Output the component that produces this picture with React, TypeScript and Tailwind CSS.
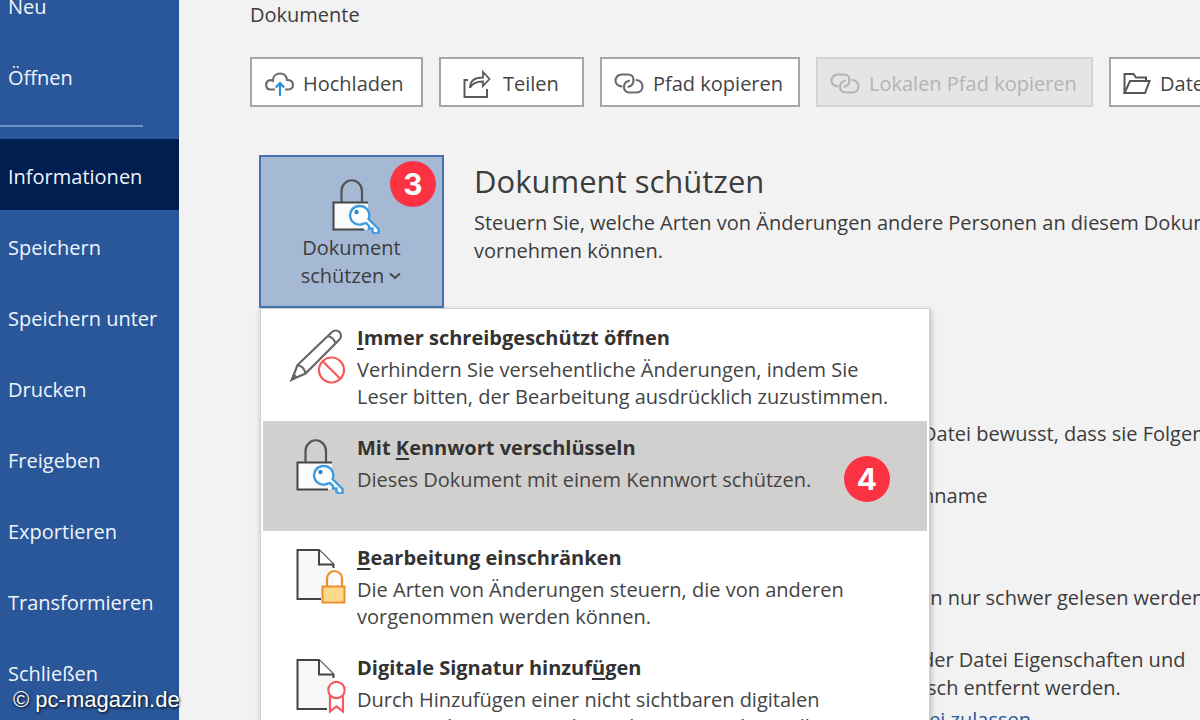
import type { ReactNode } from "react";

const navTop = ["Neu", "Öffnen"];
const navMain = [
  "Informationen",
  "Speichern",
  "Speichern unter",
  "Drucken",
  "Freigeben",
  "Exportieren",
  "Transformieren",
  "Schließen",
];

function NavItem({ label, active }: { label: string; active?: boolean }) {
  return (
    <a
      href="#"
      aria-current={active ? "page" : undefined}
      className={
        "flex h-[71px] shrink-0 items-center px-2 pt-1 font-medium whitespace-nowrap " +
        (active ? "bg-[#001e4f]" : "")
      }
    >
      {label}
    </a>
  );
}

function CloudIcon() {
  return (
    <svg width="30" height="26" viewBox="0 0 30 26" fill="none" strokeWidth="2.200">
      <path
        d="M11 18.500H6.500A4.700 4.700 0 0 1 5.500 9.300C7 9 8 9.300 8.800 9.800 9 5.500 12 2.500 16 2.500c4 0 6.500 2.800 7 6.300 3.400 0 6 2 6 4.900s-2 4.800-5 4.800h-3"
        stroke="#6c6c6c"
      />
      <path d="M16 25V12.500M11.800 16.500 16 12l4.200 4.500" stroke="#2b8fd9" />
    </svg>
  );
}

function ShareIcon() {
  return (
    <svg width="28" height="28" viewBox="0 0 28 28" fill="none" stroke="#5a5a5a" strokeWidth="2">
      <path d="M5 10H1.500v17H24v-8" />
      <path d="M7 18c0-7 5-10.500 13-10.500V2l6.500 7-6.500 7v-4.500C13 11.500 9 13.500 7 18Z" strokeWidth="1.800" />
    </svg>
  );
}

function LinkIcon({ className }: { className: string }) {
  return (
    <svg
      width="30"
      height="22"
      viewBox="0 0 30 22"
      fill="none"
      stroke="currentColor"
      strokeWidth="2.200"
      strokeLinecap="round"
      className={className}
    >
      <path d="M7.500 13.300C4 13 1.500 10.500 1.500 7.500S4 1.500 7.500 1.500H14c3.500 0 5.500 2.500 5.500 5.500 0 3.300-2 6-5 6.700" />
      <path d="M22.500 7c3.500.5 6 3 6 6.200 0 3.800-2.500 6.300-6 6.300H16c-3.500 0-6-2-6-5.300 0-3.300 2-5.700 5-6.400" />
    </svg>
  );
}

function FolderIcon() {
  return (
    <svg width="28" height="24" viewBox="0 0 28 24" fill="none" stroke="#555" strokeWidth="2">
      <path d="M1.500 21V2h9l2.500 3.500h10V9" />
      <path d="M1.500 21 7 9h19.500L22 21Z" />
    </svg>
  );
}

function LockKeyIcon() {
  return (
    <svg width="50" height="56" viewBox="0 0 50 56" fill="none">
      <path d="M9.500 24V13a10 10.500 0 0 1 20.500 0v11" stroke="#555" strokeWidth="2.200" />
      <path d="M1.500 24.500H36V51.500H1.500Z" fill="#fafafa" />
      <path d="M36 24.500H1.500v27H32" stroke="#444" strokeWidth="2" />
      <path
        d="M28 28a9.300 9.300 0 1 0 3.500 17.600l2.500-.6 3 3v2.500h3.500V54l2.500 1.500h3.500V51L36.500 41A9.300 9.300 0 0 0 28 28Z"
        fill="#fff"
        stroke="#3d9be0"
        strokeWidth="2.400"
      />
      <circle cx="24.500" cy="34" r="2.200" fill="#2e86cf" />
    </svg>
  );
}

function PencilIcon() {
  return (
    <svg width="56" height="56" viewBox="0 0 56 56" fill="none" stroke="#666" strokeWidth="2.200">
      <path d="M2 51.500 7.500 37 42 4c2-2 5.500-2 7.500 0s2 5.500 0 7.500L15.500 45.500Z" fill="#fff" />
      <path d="M7.500 37c5 1 7 3.500 8 8.500M38 8c4 1 6.500 3.500 7.500 7.500M2 51.500l4-2.500-2-2Z" />
      <circle cx="41.500" cy="42" r="12.500" fill="#fff" stroke="#f65a5f" />
      <path d="m32.700 33.200 17.600 17.600" stroke="#f65a5f" />
    </svg>
  );
}

function Page({ cut }: { cut: string }) {
  return (
    <>
      <path d="M1.500 2H23l14 14.500V51H1.500Z" fill="#f7f7f7" />
      <path d={cut} stroke="#444" strokeWidth="2" />
      <path d="M23 2v14.500h14.500" fill="#fff" stroke="#444" strokeWidth="2" />
    </>
  );
}

function PageLockIcon() {
  return (
    <svg width="50" height="56" viewBox="0 0 50 56" fill="none">
      <Page cut="M25 51H1.500V2H23l14.500 14.500V20" />
      <path d="M31 39V30.500a7.500 7.500 0 0 1 15 0V39" stroke="#ee8f2e" strokeWidth="2.200" />
      <path d="M26.500 38.500h22v16h-22Z" fill="#f9da8b" stroke="#ee8f2e" strokeWidth="2" />
    </svg>
  );
}

function PageSealIcon() {
  return (
    <svg width="50" height="56" viewBox="0 0 50 56" fill="none">
      <Page cut="M31 51H1.500V2H23l14.500 14.500V20" />
      <path d="M34 38v15.500l6.500-5 6.500 5V38" fill="#fff" stroke="#f65a5f" strokeWidth="2.200" />
      <circle cx="40.500" cy="32" r="8.200" fill="#fff" stroke="#f65a5f" strokeWidth="2.200" />
    </svg>
  );
}

function Badge({ children, className }: { children: ReactNode; className: string }) {
  return (
    <span
      className={
        "absolute flex size-[46px] items-center justify-center rounded-full bg-[#fb3242] font-['Inter',sans-serif] text-[30px] font-bold text-white " +
        className
      }
    >
      {children}
    </span>
  );
}

function ToolButton({
  icon,
  label,
  disabled,
  className,
}: {
  icon: ReactNode;
  label: string;
  disabled?: boolean;
  className: string;
}) {
  return (
    <button
      type="button"
      disabled={disabled}
      className={
        "flex h-[50px] shrink-0 items-center border-2 pt-[3px] whitespace-nowrap " +
        (disabled
          ? "border-[#d3d3d3] bg-[#e5e5e5] text-[#b4b4b4] "
          : "border-[#a6a6a6] bg-white text-[#444] ") +
        className
      }
    >
      {icon}
      {label}
    </button>
  );
}

function MenuItem({
  icon,
  title,
  lines,
  active,
  badge,
}: {
  icon: ReactNode;
  title: ReactNode;
  lines: string[];
  active?: boolean;
  badge?: ReactNode;
}) {
  return (
    <button
      type="button"
      role="menuitem"
      className={"relative flex h-[110px] w-full items-start pt-[13px] text-left " + (active ? "bg-[#d2d0ce]" : "")}
    >
      <span className="flex w-[94px] shrink-0 justify-end pt-1 pr-[11px]">{icon}</span>
      <span className="flex flex-col whitespace-nowrap">
        <span className="mb-1 leading-[28px] font-bold text-[#333]">{title}</span>
        {lines.map((line) => (
          <span key={line} className="leading-[27px] text-[#444]">
            {line}
          </span>
        ))}
      </span>
      {badge}
    </button>
  );
}

const U = ({ children }: { children: string }) => (
  <span className="underline decoration-2 underline-offset-3">{children}</span>
);

export default function App() {
  return (
    <div className="relative flex h-screen overflow-hidden bg-[#f2f2f2] font-['Open_Sans','Noto_Sans',sans-serif] text-[20px] leading-[28px] text-[#3c3c3c]">
      <aside className="w-[179px] shrink-0 overflow-hidden bg-[#29579a] text-[#f0f4fa]">
        <nav className="-mt-[31px] flex flex-col">
          {navTop.map((label) => (
            <NavItem key={label} label={label} />
          ))}
          <hr className="mt-3.5 mr-9 mb-3 border-t-2 border-[#6d93c6]" />
          {navMain.map((label, i) => (
            <NavItem key={label} label={label} active={i === 0} />
          ))}
        </nav>
      </aside>

      <main className="min-w-0 flex-1 overflow-hidden pl-[71px]">
        <p className="pt-px">Dokumente</p>

        <div className="mt-7 flex gap-4">
          <ToolButton icon={<CloudIcon />} label="Hochladen" className="w-[173px] gap-[9px] pl-3" />
          <ToolButton icon={<ShareIcon />} label="Teilen" className="w-[145px] gap-3 pl-[22px]" />
          <ToolButton
            icon={<LinkIcon className="text-[#6c6c6c]" />}
            label="Pfad kopieren"
            className="w-[200px] gap-[9px] pl-3"
          />
          <ToolButton
            icon={<LinkIcon className="text-[#b4b4b4]" />}
            label="Lokalen Pfad kopieren"
            disabled
            className="w-[277px] gap-[9px] pl-3"
          />
          <ToolButton icon={<FolderIcon />} label="Dateispeicherort öffnen" className="w-[300px] gap-[9px] pl-3" />
        </div>

        <section className="mt-12 ml-[9px] flex gap-[30px]">
          <div className="relative shrink-0">
            <button
              type="button"
              aria-haspopup="menu"
              aria-expanded="true"
              className="flex h-[153px] w-[185px] flex-col items-center border-2 border-[#4673b0] bg-[#a5b9d5] pt-[21px] font-medium"
            >
              <span className="pl-2.5">
                <LockKeyIcon />
              </span>
              <span>Dokument</span>
              <span className="flex items-center gap-1">
                schützen
                <svg width="14" height="10" viewBox="0 0 14 10" fill="none" stroke="#444" strokeWidth="2">
                  <path d="m2 2.500 5 4.500 5-4.500" />
                </svg>
              </span>
            </button>
            <Badge className="top-1.5 right-2">3</Badge>

            <div
              role="menu"
              className="absolute top-full left-px w-[670px] border border-[#d0d0d0] bg-white p-0.5 shadow-[1px_2px_6px_rgba(0,0,0,0.25)]"
            >
              <MenuItem
                icon={<PencilIcon />}
                title={<><U>I</U>mmer schreibgeschützt öffnen</>}
                lines={[
                  "Verhindern Sie versehentliche Änderungen, indem Sie",
                  "Leser bitten, der Bearbeitung ausdrücklich zuzustimmen.",
                ]}
              />
              <MenuItem
                icon={<LockKeyIcon />}
                title={<>Mit <U>K</U>ennwort verschlüsseln</>}
                lines={["Dieses Dokument mit einem Kennwort schützen."]}
                active
                badge={<Badge className="top-[35px] right-[37px]">4</Badge>}
              />
              <MenuItem
                icon={<PageLockIcon />}
                title={<><U>B</U>earbeitung einschränken</>}
                lines={["Die Arten von Änderungen steuern, die von anderen", "vorgenommen werden können."]}
              />
              <MenuItem
                icon={<PageSealIcon />}
                title={<>Digitale Signatur hinzuf<U>ü</U>gen</>}
                lines={["Durch Hinzufügen einer nicht sichtbaren digitalen", "Signatur die Integrität des Dokuments sicherstellen."]}
              />
            </div>
          </div>

          <div className="whitespace-nowrap">
            <h1 className="mt-2 mb-2.5 text-[31px] leading-[36px]">Dokument schützen</h1>
            <p>
              Steuern Sie, welche Arten von Änderungen andere Personen an diesem Dokument
              <br />
              vornehmen können.
            </p>
          </div>
        </section>

        <section className="mt-28 flex flex-col pl-[672px] whitespace-nowrap">
          <p>Datei bewusst, dass sie Folgendes enthält:</p>
          <p className="mt-[34px]">nname</p>
          <p className="mt-[74px]">rn nur schwer gelesen werden können</p>
          <p className="mt-[34px]">
            der Datei Eigenschaften und
            <br />
            isch entfernt werden.
          </p>
          <a href="#" className="mt-1 text-[#2b579a]">
            tei zulassen
          </a>
        </section>
      </main>

      <p className="absolute bottom-1.5 left-[13px] font-['Liberation_Sans',sans-serif] text-[22px] text-white [text-shadow:1px_1px_3px_#000]">
        © pc-magazin.de
      </p>
    </div>
  );
}
